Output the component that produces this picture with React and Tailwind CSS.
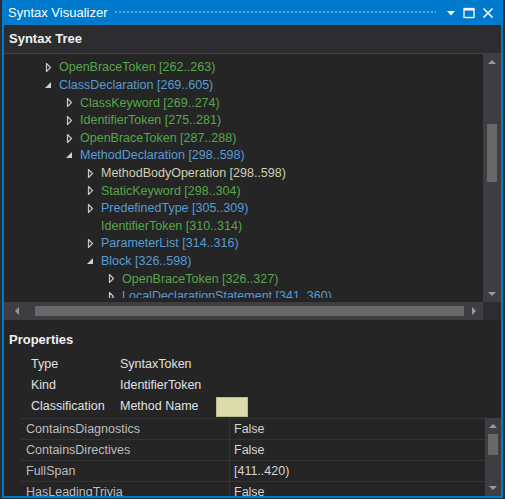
import React from 'react';

const FONT = { fontFamily: '"Liberation Sans", "Noto Sans", sans-serif' };

// tree rows shown in the syntax tree pane
const treeRows = [
  { level: 0, state: 'closed', label: 'OpenBraceToken [262..263)', color: 'text-[#57a64a]' },
  { level: 0, state: 'open', label: 'ClassDeclaration [269..605)', color: 'text-[#569cd6]' },
  { level: 1, state: 'closed', label: 'ClassKeyword [269..274)', color: 'text-[#57a64a]' },
  { level: 1, state: 'closed', label: 'IdentifierToken [275..281)', color: 'text-[#57a64a]' },
  { level: 1, state: 'closed', label: 'OpenBraceToken [287..288)', color: 'text-[#57a64a]' },
  { level: 1, state: 'open', label: 'MethodDeclaration [298..598)', color: 'text-[#569cd6]' },
  { level: 2, state: 'closed', label: 'MethodBodyOperation [298..598)', color: 'text-[#d0d0b0]' },
  { level: 2, state: 'closed', label: 'StaticKeyword [298..304)', color: 'text-[#57a64a]' },
  { level: 2, state: 'closed', label: 'PredefinedType [305..309)', color: 'text-[#569cd6]' },
  { level: 2, state: 'none', label: 'IdentifierToken [310..314)', color: 'text-[#57a64a]' },
  { level: 2, state: 'closed', label: 'ParameterList [314..316)', color: 'text-[#569cd6]' },
  { level: 2, state: 'open', label: 'Block [326..598)', color: 'text-[#569cd6]' },
  { level: 3, state: 'closed', label: 'OpenBraceToken [326..327)', color: 'text-[#57a64a]' },
  { level: 3, state: 'closed', label: 'LocalDeclarationStatement [341..360)', color: 'text-[#569cd6]' },
];

const props = [
  ['Type', 'SyntaxToken'],
  ['Kind', 'IdentifierToken'],
];

const gridRows = [
  ['ContainsDiagnostics', 'False'],
  ['ContainsDirectives', 'False'],
  ['FullSpan', '[411..420)'],
  ['HasLeadingTrivia', 'False'],
];

const indent = ['pl-[40px]', 'pl-[61px]', 'pl-[82px]', 'pl-[103px]'];

const Expander = ({ state }) => {
  if (state === 'open') {
    return (
      <svg width="9" height="9" viewBox="0 0 9 9" className="shrink-0">
        <polygon points="7,1 7,7 1,7" fill="#d0d0d0" />
      </svg>
    );
  }
  if (state === 'closed') {
    return (
      <svg width="9" height="9" viewBox="0 0 9 9" className="shrink-0">
        <polygon points="2.5,0.5 6.5,4.5 2.5,8.5" fill="none" stroke="#c8c8c8" strokeWidth="1.2" />
      </svg>
    );
  }
  return <span className="w-[9px] shrink-0" />;
};

const Arrow = ({ dir, className = '' }) => {
  const pts = {
    up: '1,6 5,2 9,6',
    down: '1,2 5,6 9,2',
    left: '6,1 2,5 6,9',
    right: '2,1 6,5 2,9',
  }[dir];
  const vert = dir === 'up' || dir === 'down';
  return (
    <svg width={vert ? 10 : 8} height={vert ? 8 : 10} viewBox={vert ? '0 0 10 8' : '0 0 8 10'} className={`shrink-0 ${className}`}>
      <polygon points={pts} fill="#999999" />
    </svg>
  );
};

export default function App() {
  return (
    <div className="w-[505px] h-[499px] bg-[#2d2d30] px-[2px] pb-[1px] overflow-hidden" style={FONT}>
      <div className="h-full flex flex-col border-x-2 border-b-2 border-[#007acc] bg-[#252526]">
        {/* Title bar */}
        <div className="h-[25px] shrink-0 bg-[#007acc] flex items-center pl-[6px] pr-[6px] -mx-[2px]">
          <span className="text-[13px] text-white leading-none">Syntax Visualizer</span>
          <div className="flex-1 ml-[7px] mr-[10px] h-[5px] bg-[radial-gradient(#5ea9e4_0.7px,transparent_0.9px)] bg-[length:4px_4px]" />
          <div className="flex items-center gap-[7px] pr-[3px]">
            <svg width="10" height="8" viewBox="0 0 10 8">
              <polygon points="1,2 9,2 5,6.5" fill="#ffffff" />
            </svg>
            <svg width="12" height="12" viewBox="0 0 12 12">
              <rect x="1" y="1.5" width="10" height="9" fill="none" stroke="#ffffff" strokeWidth="1.3" />
              <rect x="1" y="1" width="10" height="2.5" fill="#ffffff" />
            </svg>
            <svg width="12" height="12" viewBox="0 0 12 12">
              <path d="M1.5 1.5 L10.5 10.5 M10.5 1.5 L1.5 10.5" stroke="#ffffff" strokeWidth="1.6" />
            </svg>
          </div>
        </div>

        {/* Syntax Tree header */}
        <div className="h-[29px] shrink-0 bg-[#2d2d30] border-b border-[#3f3f46] flex items-center pl-[5px]">
          <span className="text-[13px] font-bold text-[#f1f1f1]">Syntax Tree</span>
        </div>

        {/* Tree pane */}
        <div className="h-[248px] shrink-0 flex">
          <div className="flex-1">
            <div className="h-[244px] pt-[5px] overflow-hidden">
              {treeRows.map((r, i) => (
                <div key={i} className={`h-[17.6px] flex items-center gap-[6px] whitespace-nowrap ${indent[r.level]}`}>
                  <Expander state={r.state} />
                  <span className={`text-[12.5px] ${r.color}`}>{r.label}</span>
                </div>
              ))}
            </div>
          </div>
          <div className="w-[18px] shrink-0 bg-[#3e3e42] flex flex-col items-center justify-between py-[4px]">
            <Arrow dir="up" />
            <div className="flex-1 w-full flex flex-col items-center pt-[58px]">
              <div className="w-[10px] h-[58px] bg-[#686868]" />
            </div>
            <Arrow dir="down" />
          </div>
        </div>

        {/* Horizontal scrollbar */}
        <div className="h-[18px] shrink-0 flex">
          <div className="flex-1 bg-[#3e3e42] flex items-center pl-[9px] pr-[5px]">
            <Arrow dir="left" />
            <div className="flex-1 h-[10px] bg-[#686868] ml-[14px] mr-[6px]" />
            <Arrow dir="right" />
          </div>
          <div className="w-[18px] bg-[#2d2d30]" />
        </div>

        {/* Properties */}
        <div className="h-[31px] shrink-0 flex items-end pb-[4px] pl-[5px] mt-[2px]">
          <span className="text-[13px] font-bold text-[#f1f1f1]">Properties</span>
        </div>
        <div className="shrink-0 pt-[1px] text-[12.5px] text-[#e0e0e0]">
          {props.map(([k, v]) => (
            <div key={k} className="h-[21px] flex items-center">
              <span className="w-[89px] pl-[27px] box-content">{k}</span>
              <span>{v}</span>
            </div>
          ))}
          <div className="h-[21px] flex items-center">
            <span className="w-[89px] pl-[27px] box-content">Classification</span>
            <span className="w-[96px]">Method Name</span>
            <div className="w-[32px] h-[20px] bg-[#dcdcaa] border border-[#bdbd8e]" />
          </div>
        </div>

        {/* Property grid */}
        <div className="flex-1 flex mt-[1px] min-h-0">
          <div className="w-[17px] shrink-0" />
          <div className="flex-1 overflow-hidden border-t border-[#333337]">
            {gridRows.map(([k, v]) => (
              <div key={k} className="h-[21px] flex items-center border-b border-[#333337] text-[12.5px]">
                <span className="w-[209px] shrink-0 h-full flex items-center pl-[5px] text-[#bdbdbd] border-r border-[#333337]">{k}</span>
                <span className="pl-[4px] text-[#d4d4d4]">{v}</span>
              </div>
            ))}
          </div>
          <div className="w-[16px] shrink-0 bg-[#3e3e42] flex flex-col items-center justify-between py-[4px]">
            <Arrow dir="up" />
            <div className="flex-1 w-full flex flex-col items-center pt-[4px]">
              <div className="w-[10px] h-[21px] bg-[#686868]" />
            </div>
            <Arrow dir="down" />
          </div>
        </div>
      </div>
    </div>
  );
}
